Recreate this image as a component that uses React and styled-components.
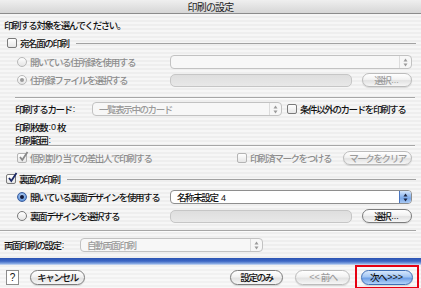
import React from "react";
import styled, { createGlobalStyle, css } from "styled-components";

const Global = createGlobalStyle`
  html, body { margin: 0; padding: 0; background: #fff; }
  * { box-sizing: border-box; }
`;

const pinstripe = css`
  background: repeating-linear-gradient(
    180deg,
    #eeeeee 0px,
    #eeeeee 2px,
    #f6f6f6 2px,
    #f6f6f6 4px
  );
`;

// ================= WINDOW =================
const Window = styled.div`
  width: 421px;
  height: 288px;
  overflow: hidden;
  display: flex;
  flex-direction: column;
  ${pinstripe};
  font-family: "Noto Sans CJK JP", "Noto Sans", sans-serif;
  font-size: 9.5px;
  font-weight: 500;
  letter-spacing: -1.4px;
  color: #111;
`;

// latin runs inside japanese labels keep normal spacing
const Latin = styled.span`
  font-family: "Liberation Sans", sans-serif;
  font-size: 9px;
  letter-spacing: 0;
  margin: 0 1px;
`;

const TitleBar = styled.div`
  height: 14px;
  flex: none;
  display: flex;
  align-items: center;
  justify-content: center;
  background: linear-gradient(#efefef, #d6d6d6);
  border-bottom: 1px solid #8c8c8c;
  font-size: 10px;
  font-weight: 400;
  letter-spacing: -0.8px;
  color: #222;
`;

// ================= ROWS =================
const Row = styled.div`
  display: flex;
  align-items: center;
  flex: none;
  margin-top: ${({ $top }) => $top || 0}px;
  height: ${({ $h }) => $h || 12}px;
  padding-left: ${({ $pl }) => $pl || 0}px;
  padding-right: ${({ $pr }) => $pr || 0}px;
  color: ${({ $dim }) => ($dim ? "#8c8c8c" : "#111")};
  white-space: nowrap;
`;

const Slot = styled.div`
  display: flex;
  align-items: center;
  flex: none;
  width: ${({ $w }) => $w}px;
  white-space: nowrap;
`;

const Rule = styled.div`
  flex: none;
  height: 2px;
  margin: ${({ $top }) => $top || 0}px ${({ $r }) => $r ?? 6}px 0 ${({ $l }) => $l ?? 15}px;
  border-top: 1px solid #a6a6a6;
  border-bottom: 1px solid #fbfbfb;
`;

const HeadLine = styled.div`
  flex: 1;
  height: 1px;
  margin: 0 5px 0 7px;
  background: #a2a2a2;
`;

const Spacer = styled.div`
  flex: 1;
`;

// ================= CHECKBOX / RADIO =================
const Box = styled.span`
  width: 10px;
  height: 10px;
  flex: none;
  margin-right: 3px;
  border: 1px solid ${({ $dim }) => ($dim ? "#b4b4b4" : "#7a7a7a")};
  border-radius: 2px;
  background: linear-gradient(#ffffff, #e6e6e6);
  position: relative;
  svg {
    position: absolute;
    left: 0px;
    top: -3px;
  }
`;

const Check = ({ checked, dim }) => (
  <Box $dim={dim}>
    {checked && (
      <svg width="11" height="11" viewBox="0 0 11 11">
        <path
          d="M2 6 L4.3 9 L9.5 1"
          fill="none"
          stroke={dim ? "#8a8a8a" : "#1c2a66"}
          strokeWidth="1.8"
        />
      </svg>
    )}
  </Box>
);

const Circle = styled.span`
  width: 10px;
  height: 10px;
  flex: none;
  margin-right: 3px;
  border-radius: 50%;
  border: 1px solid ${({ $on, $dim }) => ($on && !$dim ? "#3e5f9e" : $dim ? "#b8b8b8" : "#7a7a7a")};
  background: ${({ $on, $dim }) =>
    $on && !$dim
      ? "radial-gradient(circle at 50% 40%, #cfe2fa, #5f93da 70%)"
      : "linear-gradient(#ffffff, #e4e4e4)"};
  display: flex;
  align-items: center;
  justify-content: center;
  &::after {
    content: "";
    display: ${({ $on }) => ($on ? "block" : "none")};
    width: 4px;
    height: 4px;
    border-radius: 50%;
    background: ${({ $dim }) => ($dim ? "#9a9a9a" : "#10183a")};
  }
`;

// ================= FIELDS =================
const Popup = styled.div`
  flex: none;
  width: ${({ $w }) => $w}px;
  height: 14px;
  display: flex;
  align-items: center;
  border: 1px solid ${({ $dim }) => ($dim ? "#c2c2c2" : "#8e8e8e")};
  border-radius: 4px;
  background: ${({ $dim }) => ($dim ? "#f7f7f7" : "#ffffff")};
  color: ${({ $dim }) => ($dim ? "#9a9a9a" : "#111")};
  overflow: hidden;
`;

const PopupText = styled.span`
  flex: 1;
  padding-left: 6px;
  white-space: nowrap;
`;

const Arrows = styled.span`
  flex: none;
  width: 12px;
  height: 100%;
  display: flex;
  align-items: center;
  justify-content: center;
  border-left: 1px solid ${({ $blue }) => ($blue ? "#4a76c0" : "#dcdcdc")};
  background: ${({ $blue }) =>
    $blue ? "linear-gradient(#d5e6fb, #7aa8e8 60%, #a9c9f4)" : "transparent"};
`;

const Stepper = ({ blue, dim }) => (
  <Arrows $blue={blue}>
    <svg width="5" height="9" viewBox="0 0 5 9">
      <path d="M2.5 0.5 L4.5 3.5 L0.5 3.5 Z" fill={dim ? "#9a9a9a" : "#1a2340"} />
      <path d="M2.5 8.5 L4.5 5.5 L0.5 5.5 Z" fill={dim ? "#9a9a9a" : "#1a2340"} />
    </svg>
  </Arrows>
);

const TextField = styled.div`
  flex: none;
  width: ${({ $w }) => $w}px;
  height: 13px;
  border: 1px solid #c6c6c6;
  border-radius: 5px;
  background: linear-gradient(#dedede, #e8e8e8);
`;

// ================= BUTTONS =================
const Button = styled.div`
  flex: none;
  width: ${({ $w }) => $w}px;
  height: ${({ $h }) => $h || 14}px;
  display: flex;
  align-items: center;
  justify-content: center;
  border-radius: 8px;
  white-space: nowrap;
  border: 1px solid ${({ $kind }) =>
    $kind === "default" ? "#3f6eb5" : $kind === "dim" ? "#bcbcbc" : "#7c7c7c"};
  color: ${({ $kind }) => ($kind === "dim" ? "#9c9c9c" : "#111")};
  background: ${({ $kind }) =>
    $kind === "default"
      ? "linear-gradient(#d6e7fc 0%, #a2c6f4 45%, #6d9fe6 55%, #b3d3fa 100%)"
      : "linear-gradient(#ffffff 0%, #f2f2f2 45%, #e2e2e2 55%, #f6f6f6 100%)"};
  box-shadow: 0 1px 1px rgba(0, 0, 0, 0.12);
`;

const HelpBox = styled.div`
  flex: none;
  width: 13px;
  height: 15px;
  border: 1px solid #8c8c8c;
  background: #fff;
  display: flex;
  align-items: center;
  justify-content: center;
  font-family: "Liberation Sans", sans-serif;
  font-size: 10px;
  font-weight: 400;
  letter-spacing: 0;
`;

const Highlight = styled.div`
  flex: none;
  height: 24px;
  display: flex;
  align-items: center;
  padding: 0 4px;
  border: 2px solid #e60012;
  margin-left: 5px;
`;

// ================= BOTTOM =================
const Band = styled.div`
  flex: none;
  height: 7px;
  margin-top: 6px;
  background: linear-gradient(#2b54b3 0%, #3c66c4 45%, #86a8e2 80%, #d3e0f4 100%);
`;

const BottomBar = styled.div`
  flex: 1;
  display: flex;
  align-items: center;
  padding: 0 2px 0 6px;
  background: repeating-linear-gradient(
    180deg,
    #f1f1f1 0px,
    #f1f1f1 2px,
    #f8f8f8 2px,
    #f8f8f8 4px
  );
`;

export default function App() {
  return (
    <Window>
      <Global />
      <TitleBar>印刷の設定</TitleBar>

      <Row $top={5} $pl={4}>印刷する対象を選んでください。</Row>

      {/* 宛名面 */}
      <Row $top={6} $pl={7}>
        <Check />
        宛名面の印刷
        <HeadLine />
      </Row>
      <Row $top={6} $h={14} $pl={17} $dim>
        <Slot $w={153}>
          <Circle $dim />
          開いている住所録を使用する
        </Slot>
        <Popup $w={242} $dim>
          <PopupText />
          <Stepper dim />
        </Popup>
      </Row>
      <Row $top={4} $h={14} $pl={17} $dim>
        <Slot $w={153}>
          <Circle $on $dim />
          住所録ファイルを選択する
        </Slot>
        <TextField $w={182} />
        <Spacer />
        <Button $w={50} $kind="dim" style={{ marginRight: 9 }}>
          選択<Latin>...</Latin>
        </Button>
      </Row>
      <Rule $top={10} />

      <Row $top={2} $h={16} $pl={15}>
        <Slot $w={77}>
          印刷するカード<Latin>:</Latin>
        </Slot>
        <Popup $w={190} $dim>
          <PopupText>一覧表示中のカード</PopupText>
          <Stepper dim />
        </Popup>
        <Slot $w={5} />
        <Check />
        条件以外のカードを印刷する
      </Row>
      <Row $top={5} $h={10} $pl={15}>
        印刷枚数<Latin>:0</Latin>枚
      </Row>
      <Row $top={3} $h={10} $pl={15}>
        印刷範囲<Latin>:</Latin>
      </Row>
      <Rule />

      <Row $top={4} $h={14} $pl={17} $pr={9} $dim>
        <Check checked dim />
        個別割り当ての差出人で印刷する
        <Spacer />
        <Check dim />
        <Slot $w={93}>印刷済マークをつける</Slot>
        <Button $w={69} $kind="dim">
          マークをクリア
        </Button>
      </Row>

      {/* 裏面 */}
      <Row $top={8} $pl={6}>
        <Check checked />
        裏面の印刷
        <HeadLine />
      </Row>
      <Row $top={5} $h={14} $pl={17}>
        <Slot $w={153}>
          <Circle $on />
          開いている裏面デザインを使用する
        </Slot>
        <Popup $w={242}>
          <PopupText>
            名称未設定<Latin>&nbsp;4</Latin>
          </PopupText>
          <Stepper blue />
        </Popup>
      </Row>
      <Row $top={5} $h={14} $pl={17}>
        <Slot $w={153}>
          <Circle />
          裏面デザインを選択する
        </Slot>
        <TextField $w={182} />
        <Spacer />
        <Button $w={50} style={{ marginRight: 9 }}>
          選択<Latin>...</Latin>
        </Button>
      </Row>
      <Rule $top={7} $l={0} $r={5} />

      <Row $top={6} $h={14} $pl={4}>
        <Slot $w={76}>
          両面印刷の設定<Latin>:</Latin>
        </Slot>
        <Popup $w={183} $dim>
          <PopupText>自動両面印刷</PopupText>
          <Stepper dim />
        </Popup>
      </Row>

      <Band />
      <BottomBar>
        <HelpBox>?</HelpBox>
        <Slot $w={11} />
        <Button $w={55} $h={15}>キャンセル</Button>
        <Spacer />
        <Button $w={53} $h={15}>設定のみ</Button>
        <Slot $w={12} />
        <Button $w={55} $h={15} $kind="dim">
          <Latin>&lt;&lt;</Latin>前へ
        </Button>
        <Highlight>
          <Button $w={52} $h={15} $kind="default">
            次へ<Latin>&gt;&gt;&gt;</Latin>
          </Button>
        </Highlight>
      </BottomBar>
    </Window>
  );
}
